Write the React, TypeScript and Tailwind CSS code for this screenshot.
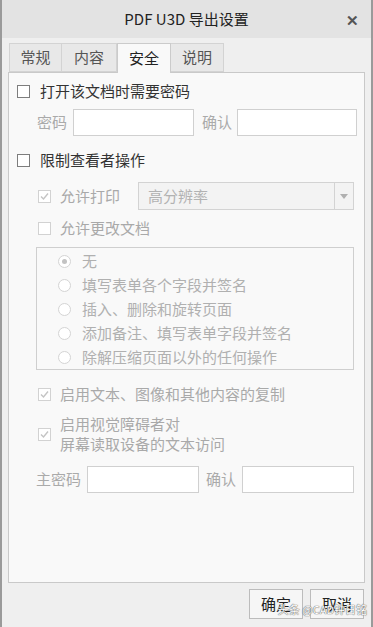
import { FC, ReactNode } from 'react';

const font = { fontFamily: '"Noto Sans CJK SC", "Noto Sans", sans-serif' };

const Box: FC<{ checked?: boolean; disabled?: boolean }> = ({ checked, disabled }) => (
  <span
    className={`flex h-[13px] w-[13px] shrink-0 items-center justify-center border bg-white ${
      disabled ? 'border-[#d2d2d2]' : 'border-[#7d7d7d]'
    }`}
  >
    {checked && (
      <svg width="11" height="11" viewBox="0 0 11 11">
        <path d="M2 5.5 L4.5 8 L9 2.5" fill="none" stroke="#c4c4c4" strokeWidth="1.4" />
      </svg>
    )}
  </span>
);

const Radio: FC<{ on?: boolean }> = ({ on }) => (
  <span className="flex h-[13px] w-[13px] shrink-0 items-center justify-center rounded-full border border-[#d4d4d4] bg-white">
    {on && <span className="h-[5px] w-[5px] rounded-full bg-[#c2c2c2]" />}
  </span>
);

const Tab: FC<{ children: ReactNode; active?: boolean; w: string }> = ({ children, active, w }) =>
  active ? (
    <div className={`${w} -mb-px flex h-[30px] items-center justify-center border border-b-0 border-[#cbcbcb] bg-[#f9f9f9] text-[15px] text-[#222]`}>
      {children}
    </div>
  ) : (
    <div className={`${w} flex h-[29px] items-center justify-center border border-l-0 border-[#d3d3d3] bg-[#e8e8e8] text-[15px] text-[#555] first:border-l`}>
      {children}
    </div>
  );

const Input: FC<{ w: string }> = ({ w }) => (
  <div className={`${w} h-[27px] border border-[#d0d0d0] bg-white`} />
);

const App: FC = () => {
  return (
    <div className="relative h-[627px] w-[373px] overflow-hidden border-x-2 border-[#9a9a9a] bg-[#efefef]" style={font}>
      {/* title bar */}
      <div className="relative flex h-[38px] items-center justify-center bg-[#e3e3e3] text-[15px] text-[#222]">
        PDF U3D 导出设置
        <span className="absolute right-[12px] top-[9px] text-[15px] font-bold text-[#555]">✕</span>
      </div>

      {/* tabs */}
      <div className="ml-[7px] mt-[5px] flex items-end">
        <Tab w="w-[53px]">常规</Tab>
        <Tab w="w-[55px]">内容</Tab>
        <Tab w="w-[54px]" active>安全</Tab>
        <Tab w="w-[53px]">说明</Tab>
      </div>

      {/* panel */}
      <div className="ml-[6px] h-[511px] w-[357px] border border-[#c9c9c9] bg-[#f9f9f9] pl-[8px] pt-[7px] text-[15px]">
        <div className="flex h-[22px] items-center gap-[10px] text-[#333]">
          <Box />
          <span>打开该文档时需要密码</span>
        </div>

        <div className="mt-[7px] flex items-center text-[#aaa]">
          <span className="ml-[20px] w-[36px]">密码</span>
          <Input w="w-[121px]" />
          <span className="ml-[8px] w-[35px]">确认</span>
          <Input w="w-[120px]" />
        </div>

        <div className="mt-[13px] flex h-[22px] items-center gap-[10px] text-[#333]">
          <Box />
          <span>限制查看者操作</span>
        </div>

        <div className="ml-[21px] mt-[11px] flex items-center text-[#a9a9a9]">
          <Box checked disabled />
          <span className="ml-[9px] w-[78px]">允许打印</span>
          <div className="flex h-[28px] w-[216px] border border-[#d3d3d3] bg-[#f3f3f3]">
            <span className="flex flex-1 items-center pl-[9px] text-[#b2b2b2]">高分辨率</span>
            <span className="flex w-[19px] items-center justify-center border-l border-[#d3d3d3]">
              <svg width="8" height="5" viewBox="0 0 8 5">
                <path d="M0 0 H8 L4 5 Z" fill="#b0b0b0" />
              </svg>
            </span>
          </div>
        </div>

        <div className="ml-[21px] mt-[7px] flex h-[22px] items-center gap-[9px] text-[#a9a9a9]">
          <Box disabled />
          <span>允许更改文档</span>
        </div>

        <div className="ml-[19px] mt-[8px] h-[123px] w-[318px] border border-[#cfcfcf] pl-[21px] pt-px text-[#b0b0b0]">
          {['无', '填写表单各个字段并签名', '插入、删除和旋转页面', '添加备注、填写表单字段并签名', '除解压缩页面以外的任何操作'].map(
            (t, i) => (
              <div key={t} className="flex h-[24px] items-center gap-[11px]">
                <Radio on={i === 0} />
                <span>{t}</span>
              </div>
            )
          )}
        </div>

        <div className="ml-[21px] mt-[13px] flex h-[22px] items-center gap-[9px] text-[#a9a9a9]">
          <Box checked disabled />
          <span>启用文本、图像和其他内容的复制</span>
        </div>

        <div className="ml-[21px] mt-[9px] flex items-center gap-[9px] text-[#a9a9a9]">
          <Box checked disabled />
          <div className="leading-[20px]">
            <div>启用视觉障碍者对</div>
            <div>屏幕读取设备的文本访问</div>
          </div>
        </div>

        <div className="ml-[19px] mt-[12px] flex items-center text-[#aaa]">
          <span className="w-[51px]">主密码</span>
          <Input w="w-[112px]" />
          <span className="ml-[7px] w-[36px]">确认</span>
          <Input w="w-[112px]" />
        </div>
      </div>

      {/* buttons */}
      <div className="mr-[7px] mt-[6px] flex justify-end gap-[7px] text-[15px] text-[#222]">
        <button className="h-[30px] w-[54px] border border-[#bcbcbc] bg-[#f6f6f6]">确定</button>
        <button className="h-[30px] w-[54px] border border-[#bcbcbc] bg-[#f6f6f6]">取消</button>
      </div>

      {/* watermark */}
      <div
        className="absolute bottom-[10px] right-[4px] text-[11px] text-white"
        style={{ textShadow: '0 0 1px #555, 0 0 1px #555' }}
      >
        头条 @CAD钟日铭
      </div>
    </div>
  );
};

export default App;
